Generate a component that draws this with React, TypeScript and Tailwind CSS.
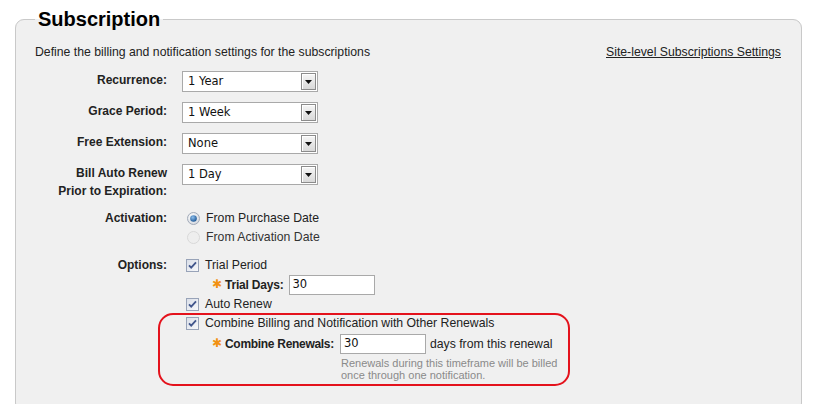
const Select = ({ value }: { value: string }) => (
  <div className="flex h-[21px] w-[136px] items-center border border-[#a9a9a9] bg-white">
    <span className="pl-[5px] font-['DejaVu_Sans',sans-serif] text-[11.5px] text-[#111]">{value}</span>
    <div className="ml-auto mr-[1px] flex h-[17px] w-[15px] items-center justify-center border border-[#8c8c8c] bg-gradient-to-b from-[#f6f6f6] to-[#d9d9d9] shadow-[inset_1px_1px_0_#fff]">
      <svg width="7" height="4" viewBox="0 0 7 4">
        <path d="M0 0h7L3.5 4z" fill="#111" />
      </svg>
    </div>
  </div>
);

const Checkbox = () => (
  <svg width="13" height="13" viewBox="0 0 13 13" className="shrink-0">
    <defs>
      <linearGradient id="cb" x1="0" y1="0" x2="1" y2="1">
        <stop offset="0" stopColor="#d9dee8" />
        <stop offset="1" stopColor="#f8f9fb" />
      </linearGradient>
    </defs>
    <rect x="0.5" y="0.5" width="12" height="12" fill="url(#cb)" stroke="#98a3b8" />
    <path d="M3 6.3l2.2 2.4L10 3.4" fill="none" stroke="#41568c" strokeWidth="1.8" />
  </svg>
);

const Radio = ({ on }: { on?: boolean }) => (
  <svg width="13" height="13" viewBox="0 0 13 13" className="shrink-0">
    <defs>
      <radialGradient id="rg" cx="0.4" cy="0.35" r="0.7">
        <stop offset="0" stopColor="#ffffff" />
        <stop offset="1" stopColor="#d3d7de" />
      </radialGradient>
      <radialGradient id="rd" cx="0.4" cy="0.35" r="0.7">
        <stop offset="0" stopColor="#8fc0ee" />
        <stop offset="1" stopColor="#16508f" />
      </radialGradient>
    </defs>
    {on ? (
      <>
        <circle cx="6.5" cy="6.5" r="6" fill="url(#rg)" stroke="#a2aab8" />
        <circle cx="6.5" cy="6.5" r="3.3" fill="url(#rd)" />
      </>
    ) : (
      <circle cx="6.5" cy="6.5" r="6" fill="#eeeeee" stroke="#d8d8d8" />
    )}
  </svg>
);

const TextInput = ({ value, w }: { value: string; w: string }) => (
  <div className={`flex h-[20px] items-center border border-[#a9a9a9] bg-white pl-[3px] ${w}`}>
    <span className="font-['DejaVu_Sans',sans-serif] text-[11.5px] text-[#111]">{value}</span>
  </div>
);

// required marker
const Star = () => (
  <span className="mb-[3px] w-[13px] shrink-0 font-['DejaVu_Sans',sans-serif] text-[12px] leading-[14px] text-[#f29111]">✱</span>
);

export default function App() {
  return (
    <div className="min-h-[404px] bg-white font-['Liberation_Sans',Arial,sans-serif] text-[#222]">
      <fieldset className="ml-[15px] mt-[8px] w-[787px] rounded-[9px] border border-[#c9c9c9] bg-[#f0f0f0] pb-[30px] pl-[19px] pr-5 pt-[14px]">
        <legend className="px-[3px] text-[20px] font-bold leading-[22px] text-black">Subscription</legend>

        <div className="flex justify-between text-[12.25px] leading-[16px]">
          <span>Define the billing and notification settings for the subscriptions</span>
          <a href="#" className="underline">Site-level Subscriptions Settings</a>
        </div>

        <div className="mt-[11px] flex flex-col gap-[10px] text-[12px]">
          <div className="flex gap-[15px]">
            <div className="w-[132px] text-right font-bold leading-[18px]">Recurrence:</div>
            <Select value="1 Year" />
          </div>
          <div className="flex gap-[15px]">
            <div className="w-[132px] text-right font-bold leading-[18px]">Grace Period:</div>
            <Select value="1 Week" />
          </div>
          <div className="flex gap-[15px]">
            <div className="w-[132px] text-right font-bold leading-[18px]">Free Extension:</div>
            <Select value="None" />
          </div>
          <div className="flex gap-[15px]">
            <div className="w-[132px] text-right font-bold leading-[18px]">
              Bill Auto Renew
              <br />
              Prior to Expiration:
            </div>
            <Select value="1 Day" />
          </div>
        </div>

        <div className="mt-[9px] flex gap-[15px] text-[12.25px]">
          <div className="w-[132px] text-right text-[12px] font-bold leading-[19px]">Activation:</div>
          <div className="flex flex-col">
            <div className="flex h-[19px] items-center gap-[6px] pl-[5px]">
              <Radio on />
              <span>From Purchase Date</span>
            </div>
            <div className="flex h-[19px] items-center gap-[6px] pl-[5px] text-[#333]">
              <Radio />
              <span>From Activation Date</span>
            </div>
          </div>
        </div>

        <div className="mt-[9px] flex gap-[15px] text-[12.25px]">
          <div className="w-[132px] text-right text-[12px] font-bold leading-[19px]">Options:</div>
          <div className="flex flex-col">
            <div className="flex h-[19px] items-center gap-[6px] pl-[4px]">
              <Checkbox />
              <span>Trial Period</span>
            </div>
            <div className="flex h-[20px] items-center pl-[30px]">
              <Star />
              <span className="mr-[5px] text-[12px] font-bold tracking-[-0.2px]">Trial Days:</span>
              <TextInput value="30" w="w-[86px]" />
            </div>
            <div className="flex h-[19px] items-center gap-[6px] pl-[4px]">
              <Checkbox />
              <span>Auto Renew</span>
            </div>

            <div className="relative flex flex-col">
              <div className="pointer-events-none absolute left-[-24px] top-[-1px] h-[73px] w-[412px] rounded-[15px] border-2 border-[#e4121c]" />
              <div className="flex h-[19px] items-center gap-[6px] pl-[4px]">
                <Checkbox />
                <span>Combine Billing and Notification with Other Renewals</span>
              </div>
              <div className="mt-[1px] flex h-[20px] items-center pl-[30px]">
                <Star />
                <span className="mr-[6px] text-[12px] font-bold tracking-[-0.3px]">Combine Renewals:</span>
                <TextInput value="30" w="w-[86px]" />
                <span className="ml-[4px]">days from this renewal</span>
              </div>
              <div className="ml-[159px] mt-[3px] text-[11px] leading-[12px] text-[#8a8a8a]">
                Renewals during this timeframe will be billed
                <br />
                once through one notification.
              </div>
            </div>
          </div>
        </div>
      </fieldset>
    </div>
  );
}
